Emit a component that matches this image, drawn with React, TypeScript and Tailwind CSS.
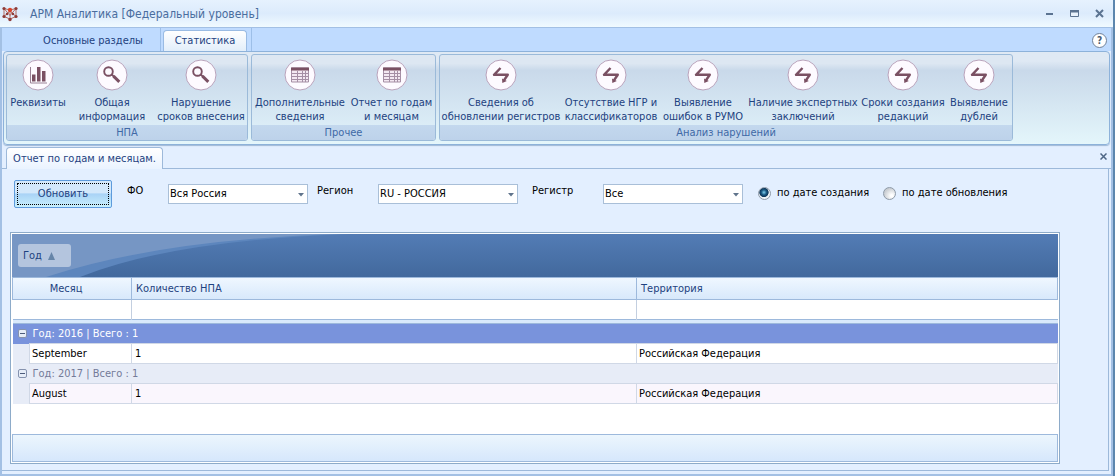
import React, { useState } from 'react';

type IconName = 'chart' | 'search' | 'table' | 'zigzag';

interface RibbonItem {
  icon: IconName;
  lines: string[];
  width: string;
}

interface RibbonGroup {
  title: string;
  items: RibbonItem[];
}

interface YearGroup {
  year: number;
  total: number;
  rows: { month: string; count: number; territory: string }[];
}

const ribbonGroups: RibbonGroup[] = [
  {
    title: 'НПА',
    items: [
      { icon: 'chart', lines: ['Реквизиты'], width: 'w-[62px]' },
      { icon: 'search', lines: ['Общая', 'информация'], width: 'w-[86px]' },
      { icon: 'search', lines: ['Нарушение', 'сроков внесения'], width: 'w-[92px]' },
    ],
  },
  {
    title: 'Прочее',
    items: [
      { icon: 'table', lines: ['Дополнительные', 'сведения'], width: 'w-[96px]' },
      { icon: 'table', lines: ['Отчет по годам', 'и месяцам'], width: 'w-[87px]' },
    ],
  },
  {
    title: 'Анализ нарушений',
    items: [
      { icon: 'zigzag', lines: ['Сведения об', 'обновлении регистров'], width: 'w-[122px]' },
      { icon: 'zigzag', lines: ['Отсутствие НГР и', 'классификаторов'], width: 'w-[98px]' },
      { icon: 'zigzag', lines: ['Выявление', 'ошибок в РУМО'], width: 'w-[86px]' },
      { icon: 'zigzag', lines: ['Наличие экспертных', 'заключений'], width: 'w-[114px]' },
      { icon: 'zigzag', lines: ['Сроки создания', 'редакций'], width: 'w-[86px]' },
      { icon: 'zigzag', lines: ['Выявление', 'дублей'], width: 'w-[66px]' },
    ],
  },
];

const yearGroups: YearGroup[] = [
  { year: 2016, total: 1, rows: [{ month: 'September', count: 1, territory: 'Российская Федерация' }] },
  { year: 2017, total: 1, rows: [{ month: 'August', count: 1, territory: 'Российская Федерация' }] },
];

const RibbonIcon: React.FC<{ name: IconName }> = ({ name }) => (
  <svg viewBox="0 0 32 32" className="h-8 w-8" fill="none" aria-hidden="true">
    <circle cx="16" cy="16" r="15" fill="#fdfaff" stroke="#b9a3bb" />
    {name === 'chart' && (
      <g>
        <path d="M8.500 8v16h16.500" stroke="#9a8296" />
        <path d="M10 15.500h3.500v7H10zM15 8h3.500v14.500H15zM20 12h3.500v10.500H20z" fill="#7a5063" />
      </g>
    )}
    {name === 'search' && (
      <g stroke="#7a5063">
        <circle cx="12.500" cy="12.500" r="4.300" strokeWidth="1.900" />
        <path d="M15.500 15.500l3 2.500" strokeWidth="2" />
        <path d="M17.500 17.200l5.800 5.600" strokeWidth="3" />
      </g>
    )}
    {name === 'table' && (
      <g>
        <path d="M7.500 9h17v14h-17z" fill="#f3e8f2" stroke="#a58fa5" />
        <path d="M7 8.500h18v3H7z" fill="#7a5063" />
        <path d="M7.500 14.500h17M7.500 17.500h17M7.500 20.500h17M13.500 12v11M18.500 12v11M21.500 12v11" stroke="#a58fa5" />
      </g>
    )}
    {name === 'zigzag' && (
      <g stroke="#7a5063" strokeWidth="2.400">
        <path d="M15.500 9L9 15.800h13.800l-3.800 5.500" strokeLinejoin="round" />
        <path d="M17 19.500l.3 4.500 4.500-2z" fill="#7a5063" stroke="none" />
      </g>
    )}
  </svg>
);

const AppLogo: React.FC = () => (
  <svg viewBox="0 0 16 16" className="h-4 w-4" fill="none" aria-hidden="true">
    <path d="M2 2.500l6 1.500 6-1.500v8L8 13l-6-2.500zM2 2.500l6 7 6-7M2 10.500L8 5l6 5.500M8 4v9" stroke="#b56a60" />
    <g fill="#8e3a36">
      <circle cx="2" cy="2.500" r="1.600" />
      <circle cx="14" cy="2.500" r="1.600" />
      <circle cx="2" cy="10.500" r="1.600" />
      <circle cx="14" cy="10.500" r="1.600" />
      <circle cx="8" cy="13.500" r="1.700" />
      <circle cx="5" cy="8" r="1.200" />
      <circle cx="11" cy="8" r="1.200" />
    </g>
    <circle cx="8" cy="4" r="2.200" fill="#d8452c" />
  </svg>
);

interface SelectFieldProps {
  id: string;
  label: string;
  options: string[];
  labelClass: string;
}

const SelectField: React.FC<SelectFieldProps> = ({ id, label, options, labelClass }) => (
  <div className="flex items-start">
    <label htmlFor={id} className={labelClass}>{label}</label>
    <div className="relative">
      <select id={id} className="block h-5 w-[140px] appearance-none border border-[#a9bfd8] bg-white px-px text-black">
        {options.map((option) => (
          <option key={option}>{option}</option>
        ))}
      </select>
      <svg viewBox="0 0 6 4" className="pointer-events-none absolute top-[9px] right-1 h-[4px] w-[6px]" aria-hidden="true">
        <path d="M0 0h6L3 3.500z" fill="#60748c" />
      </svg>
    </div>
  </div>
);

const radioClass =
  'm-0 h-[13px] w-[13px] appearance-none rounded-full border border-[#8e9aa8] bg-[radial-gradient(circle_at_70%_70%,#ffffff_10%,#c9cdd2_70%)] checked:bg-[radial-gradient(circle_at_45%_40%,#7fd0ee_0%,#1b5a84_28%,#0d3557_48%,#eef3f7_56%)]';

const App: React.FC = () => {
  const [dateMode, setDateMode] = useState<'created' | 'updated'>('created');

  return (
    <div className="flex min-h-screen flex-col border-r-2 border-[#5c86ae] bg-[#e3efff] font-['DejaVu_Sans_Condensed','Noto_Sans',sans-serif] text-[11px] leading-[14px] text-black">
      <header className="flex h-[27px] items-center justify-between bg-linear-to-b from-[#e6f2fe] via-[#dcebfc] to-[#f0faff] px-[2px]">
        <div className="flex items-center gap-[12px]">
          <AppLogo />
          <h1 className="text-[12px] text-[#4a6d9e]">АРМ Аналитика [Федеральный уровень]</h1>
        </div>
        <div className="flex items-center gap-4 pr-[7px] text-[#5b7391]">
          <button aria-label="Свернуть">
            <svg viewBox="0 0 9 9" className="h-[9px] w-[9px]"><path d="M1 4h7v2H1z" fill="currentColor" /></svg>
          </button>
          <button aria-label="Развернуть">
            <svg viewBox="0 0 9 9" className="h-[9px] w-[9px]">
              <path d="M.5 1.500h8v6h-8z" fill="#e8f2fc" stroke="currentColor" />
              <path d="M0 1h9v2.500H0z" fill="currentColor" />
            </svg>
          </button>
          <button aria-label="Закрыть">
            <svg viewBox="0 0 9 9" className="h-[9px] w-[9px]"><path d="M1 1l7 7M8 1L1 8" stroke="currentColor" strokeWidth="2" /></svg>
          </button>
        </div>
      </header>

      <div className="flex flex-1 flex-col border-x-2 border-t border-[#a3c0e4]">
        <nav className="flex h-[23px] items-end justify-between bg-[#bfdbff] pr-[4px]">
          <div className="flex h-full items-end">
            <button className="h-full w-[159px] border-r border-[#9dbfe8] pt-[3px] pl-[24px] text-[#1e4280]">Основные разделы</button>
            <button className="ml-[2px] h-[21px] w-[84px] rounded-t border border-b-0 border-[#9abbe3] bg-linear-to-b from-white to-[#e2eefa] text-[#1e4280]">Статистика</button>
            <span className="ml-[4px] h-full border-l border-[#9dbfe8]" />
          </div>
          <button aria-label="Справка" className="mb-[3px] h-[15px] w-[15px] rounded-full border border-[#6f819a] bg-white text-[10px] leading-[13px] font-bold text-[#4a5a70]">?</button>
        </nav>

        <section className="mx-px flex gap-[3px] rounded border border-[#8db2da] bg-linear-to-b from-[#dfe9f4] from-10% via-[#c9d9ea] via-20% to-[#e4f6fb] p-[2px] pb-[3px] shadow-[0_1px_1px_#9fb9d6]">
          {ribbonGroups.map((group) => (
            <div key={group.title} className="flex flex-col overflow-hidden rounded-[3px] border border-[#9bbad9] bg-linear-to-b from-[#dde7f2] from-10% via-[#c9d9ea] via-18% to-[#e0f2fa]">
              <div className="flex h-[70px] pt-[4px]">
                {group.items.map((item) => (
                  <button key={item.lines.join(' ')} className={`${item.width} flex flex-col items-center gap-[5px] whitespace-nowrap text-[#1e4280]`}>
                    <RibbonIcon name={item.icon} />
                    <span className="flex flex-col items-center">
                      {item.lines.map((line) => (
                        <span key={line}>{line}</span>
                      ))}
                    </span>
                  </button>
                ))}
              </div>
              <div className="h-[15px] bg-linear-to-b from-[#c3d8ee] to-[#bdd2ea] pt-px text-center text-[#4069a6]">{group.title}</div>
            </div>
          ))}
        </section>

        <main className="flex flex-1 flex-col pt-[2px]">
          <div className="flex items-end">
            <span className="w-1 self-stretch border-b border-[#9db9da]" />
            <button className="h-[22px] w-[157px] rounded-t border border-b-0 border-[#9db9da] bg-linear-to-b from-white to-[#eaf3ff] text-[#1e4280]">
              Отчет по годам и месяцам.
            </button>
            <span className="flex flex-1 justify-end self-stretch border-b border-[#9db9da] pt-[4px] pr-[4px]">
              <button aria-label="Закрыть вкладку" className="h-[11px]">
                <svg viewBox="0 0 7 7" className="h-[7px] w-[7px]"><path d="M.5.5l6 6M6.500.5l-6 6" stroke="#4e6685" strokeWidth="1.500" /></svg>
              </button>
            </span>
          </div>

          <div className="mr-[2px] mb-[3px] flex-1 border-r border-b border-[#9db9da] pr-[48px] pb-[6px] pl-[8px]">
            <form className="flex h-[63px] items-start pt-[11px] pl-[4px]" onSubmit={(e) => e.preventDefault()}>
              <button className="h-[28px] w-[98px] rounded-[2px] border border-[#5d9bdc] bg-linear-to-b from-[#d3e8fb] from-45% via-[#a9d3f6] via-50% to-[#c9f0fd] text-[#1e4280] outline-1 -outline-offset-4 outline-dotted outline-black">
                Обновить
              </button>
              <div className="flex gap-[9px] pt-[4px] pl-[15px]">
                <SelectField id="district" label="ФО" options={['Вся Россия']} labelClass="w-[41px]" />
                <SelectField id="region" label="Регион" options={['RU - РОССИЯ']} labelClass="w-[61px]" />
                <SelectField id="register" label="Регистр" options={['Все']} labelClass="w-[76px] pl-[5px]" />
              </div>
              <div className="flex gap-[14px] pt-[6px] pl-[15px]">
                <label className="flex items-center gap-[6px] whitespace-nowrap">
                  <input type="radio" name="dateMode" className={radioClass} checked={dateMode === 'created'} onChange={() => setDateMode('created')} />
                  по дате создания
                </label>
                <label className="flex items-center gap-[6px] whitespace-nowrap">
                  <input type="radio" name="dateMode" className={radioClass} checked={dateMode === 'updated'} onChange={() => setDateMode('updated')} />
                  по дате обновления
                </label>
              </div>
            </form>

            <div className="border border-[#8dabc9] bg-white p-px">
              <div className="relative flex h-[43px] items-center bg-linear-to-b from-[#537cb5] to-[#42699d] pl-[6px]">
                <svg viewBox="0 0 340 43" className="absolute top-0 left-0 h-[43px] w-[340px]" aria-hidden="true">
                  <path d="M0 0h340Q160 6 68 43H0z" fill="#5d86bd" />
                  <path d="M0 0h330Q150 5 34 43H0z" fill="#7696c4" />
                </svg>
                <button className="relative flex h-[23px] w-[53px] items-center gap-[6px] rounded-[3px] bg-[#b4c5de] pl-[5px] text-[#1e4280]">
                  Год
                  <svg viewBox="0 0 7 8" className="h-2 w-[7px]" aria-hidden="true"><path d="M3.500 0L7 8H0z" fill="#6685a8" /></svg>
                </button>
              </div>

              <table className="w-full table-fixed border-collapse text-left">
                <colgroup>
                  <col className="w-[17px]" />
                  <col className="w-[102px]" />
                  <col className="w-[505px]" />
                  <col />
                </colgroup>
                <thead>
                  <tr className="h-[22px] bg-linear-to-b from-[#eff7ff] to-[#d7e8fb] text-[#1e4280]">
                    <th colSpan={2} className="border border-[#9db9dc] pr-[12px] text-center font-normal">Месяц</th>
                    <th className="border border-[#9db9dc] px-1 font-normal">Количество НПА</th>
                    <th className="border border-[#9db9dc] px-1 font-normal">Территория</th>
                  </tr>
                  <tr className="h-[20px]">
                    <td colSpan={2} className="border-r border-[#c3cfe0]" />
                    <td className="border-r border-[#c3cfe0]" />
                    <td />
                  </tr>
                  <tr className="h-[4px] bg-[#d9e9fb]">
                    <td colSpan={4} className="border-y border-[#9db9dc]" />
                  </tr>
                </thead>
                {yearGroups.map((group, index) => (
                  <tbody key={group.year}>
                    <tr className={`h-[20px] ${index === 0 ? 'bg-[#7993dc] text-white' : 'bg-[#e7ecf7] text-[#747b99]'}`}>
                      <td className="pl-[5px]">
                        <button aria-label={`Свернуть ${group.year}`} className="block">
                          <svg viewBox="0 0 9 9" className="h-[9px] w-[9px]">
                            <rect x=".5" y=".5" width="8" height="8" rx="1.500" fill="#e6edf8" stroke="#8592ae" />
                            <path d="M2 4h5v1H2z" fill="#4c5c7c" />
                          </svg>
                        </button>
                      </td>
                      <td colSpan={3} className="pl-[3px]">Год: {group.year} | Всего : {group.total}</td>
                    </tr>
                    {group.rows.map((row) => (
                      <tr key={row.month} className={`h-[20px] ${index === 0 ? 'bg-white' : 'bg-[#faf6fd]'}`}>
                        <td className="bg-[#e7ecf7]" />
                        <td className="border border-[#d0d8e6] pl-[2px]">{row.month}</td>
                        <td className="border border-[#d0d8e6] pl-[3px]">{row.count}</td>
                        <td className="border border-[#d0d8e6] pl-[2px]">{row.territory}</td>
                      </tr>
                    ))}
                  </tbody>
                ))}
              </table>
              <div className="h-[30px]" />
              <div className="h-[28px] border border-[#9db9dc] bg-linear-to-b from-[#ecf6fd] to-[#d6e7fc]" />
            </div>
          </div>
          <div className="-mx-[2px] h-[2px] bg-[#a3c0e4]" />
        </main>
      </div>
    </div>
  );
};

export default App;
